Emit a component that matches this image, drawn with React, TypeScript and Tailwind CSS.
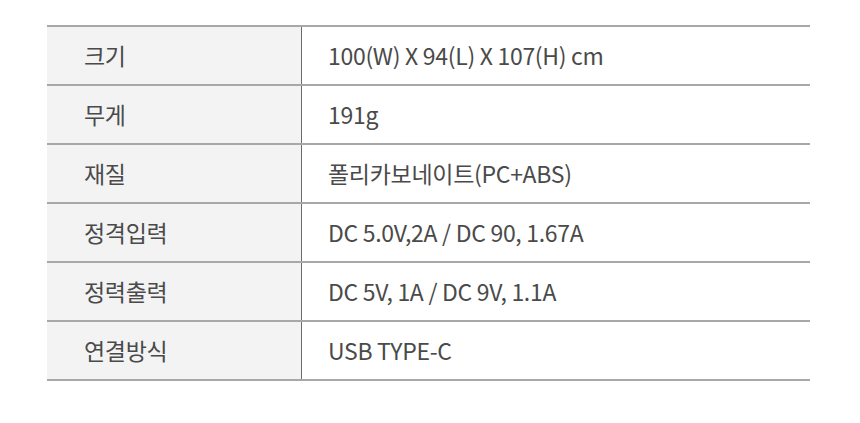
const rows = [
  { label: '크기', value: '100(W) X 94(L) X 107(H) cm' },
  { label: '무게', value: '191g' },
  { label: '재질', value: '폴리카보네이트(PC+ABS)' },
  { label: '정격입력', value: 'DC 5.0V,2A / DC 90, 1.67A' },
  { label: '정력출력', value: 'DC 5V, 1A / DC 9V, 1.1A' },
  { label: '연결방식', value: 'USB TYPE-C' },
]

export default function App() {
  return (
    <div
      className="w-[860px] h-[423px] bg-white pt-[25px] pl-[47px]"
      style={{ fontFamily: '"Noto Sans CJK KR", "Noto Sans", sans-serif' }}
    >
      <div className="w-[763px] border-t-2 border-[#a8a8a8]">
        {rows.map((row) => (
          <div key={row.label} className="flex h-[59px] border-b-2 border-[#a8a8a8]">
            <div className="w-[255px] shrink-0 bg-[#f3f3f3] border-r border-[#6b6b6b] flex items-center pl-[37px] text-[23px] text-[#4a4a4a] tracking-[-0.3px]">
              {row.label}
            </div>
            <div className="flex-1 flex items-center pl-[26px] text-[23px] text-[#4a4a4a] tracking-[-0.3px]">
              {row.value}
            </div>
          </div>
        ))}
      </div>
    </div>
  )
}
